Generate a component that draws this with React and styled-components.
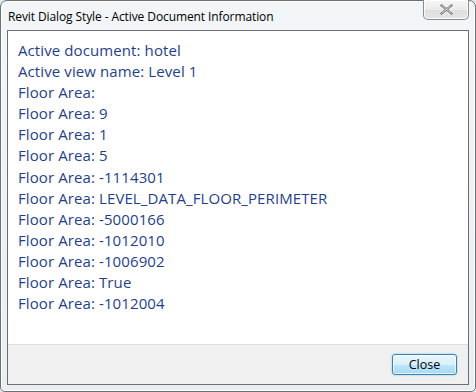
import React from "react";
import styled, { createGlobalStyle } from "styled-components";

const GlobalStyle = createGlobalStyle`
  html, body {
    margin: 0;
    padding: 0;
    background: #dfe6ee;
  }
  body {
    font-family: "Open Sans", "Noto Sans", sans-serif;
  }
`;

const Window = styled.div`
  box-sizing: border-box;
  width: 476px;
  height: 392px;
  display: flex;
  flex-direction: column;
  border: 1px solid #707070;
  border-radius: 7px 7px 5px 5px;
  background: linear-gradient(180deg, #f3f6f9 0%, #eef2f6 40%, #e8eef4 100%);
  box-shadow: inset 0 0 0 1px rgba(255, 255, 255, 0.85);
  padding: 0 6px 6px 6px;
`;

const TitleBar = styled.div`
  height: 29px;
  display: flex;
  align-items: flex-start;
  justify-content: space-between;
`;

const Caption = styled.span`
  font-family: "Open Sans", sans-serif;
  font-size: 12px;
  letter-spacing: -0.1px;
  color: #000;
  line-height: 16px;
  margin-top: 8px;
  margin-left: 1px;
`;

const CaptionButton = styled.button`
  box-sizing: border-box;
  width: 46px;
  height: 20px;
  margin-top: -1px;
  margin-right: 0;
  padding: 0;
  display: flex;
  align-items: center;
  justify-content: center;
  border: 1px solid #8c8c8c;
  border-top: none;
  border-radius: 0 0 5px 5px;
  background: linear-gradient(180deg, #f6f6f6 0%, #ebebeb 50%, #dedede 51%, #e6e6e6 100%);
  box-shadow: inset 0 0 0 1px rgba(255, 255, 255, 0.8);
`;

const Client = styled.div`
  flex: 1;
  display: flex;
  flex-direction: column;
  border: 1px solid #6e6e6e;
  background: #fff;
`;

const Content = styled.div`
  flex: 1;
  padding: 9px 10px 0 10px;
`;

const Line = styled.div`
  font-family: "Open Sans", sans-serif;
  font-size: 15px;
  line-height: 21.1px;
  letter-spacing: 0.1px;
  color: #1f3f8c;
  white-space: nowrap;
`;

const Footer = styled.div`
  height: 39px;
  border-top: 1px solid #dfdfdf;
  background: #f0f0f0;
  display: flex;
  align-items: center;
  justify-content: flex-end;
  padding-right: 11px;
`;

const Button = styled.button`
  box-sizing: border-box;
  width: 65px;
  height: 21px;
  margin-top: -1px;
  padding: 0;
  font-family: "Open Sans", sans-serif;
  font-size: 12.5px;
  color: #000;
  border: 1px solid #3c7fb1;
  border-radius: 3px;
  background: linear-gradient(180deg, #eaf6fd 0%, #d9f0fc 50%, #bee6fd 51%, #a7d9f5 100%);
  box-shadow: inset 0 0 0 1px rgba(255, 255, 255, 0.7), 0 0 2px #6cc4f0;
`;

const CloseGlyph = () => (
  <svg width="13" height="11" viewBox="0 0 13 11">
    <path
      d="M1.5 1.5 L11.5 9.5 M11.5 1.5 L1.5 9.5"
      stroke="#fff"
      strokeWidth="4.2"
      strokeLinecap="round"
    />
    <path
      d="M1.5 1.5 L11.5 9.5 M11.5 1.5 L1.5 9.5"
      stroke="#7d7d7d"
      strokeWidth="2.6"
      strokeLinecap="round"
    />
    <path
      d="M2 2 L11 9 M11 2 L2 9"
      stroke="#d8d8d8"
      strokeWidth="1"
      strokeLinecap="round"
    />
  </svg>
);

const lines = [
  "Active document: hotel",
  "Active view name: Level 1",
  "Floor Area: ",
  "Floor Area: 9",
  "Floor Area: 1",
  "Floor Area: 5",
  "Floor Area: -1114301",
  "Floor Area: LEVEL_DATA_FLOOR_PERIMETER",
  "Floor Area: -5000166",
  "Floor Area: -1012010",
  "Floor Area: -1006902",
  "Floor Area: True",
  "Floor Area: -1012004",
];

export default function App() {
  return (
    <>
      <GlobalStyle />
      <Window>
        <TitleBar>
          <Caption>Revit Dialog Style - Active Document Information</Caption>
          <CaptionButton aria-label="Close">
            <CloseGlyph />
          </CaptionButton>
        </TitleBar>
        <Client>
          <Content>
            {lines.map((l, i) => (
              <Line key={i}>{l}</Line>
            ))}
          </Content>
          <Footer>
            <Button>Close</Button>
          </Footer>
        </Client>
      </Window>
    </>
  );
}
